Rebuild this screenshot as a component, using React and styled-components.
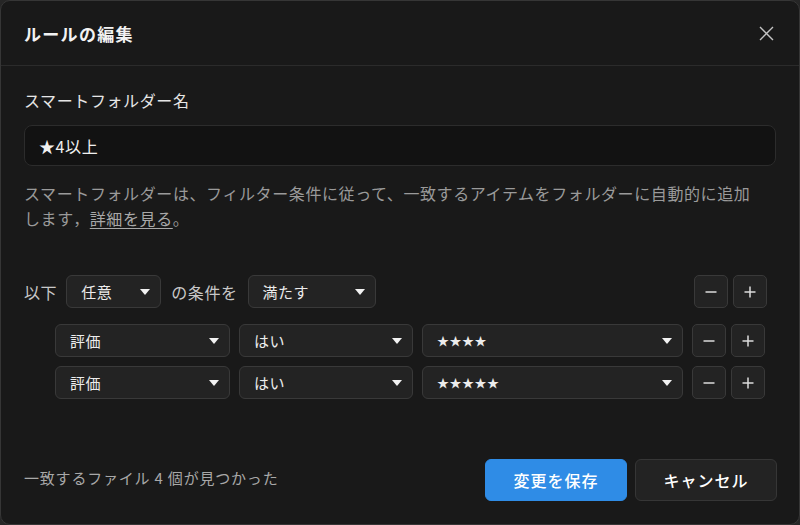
import styled, { createGlobalStyle } from 'styled-components'

const GlobalStyle = createGlobalStyle`
html, body {
    margin: 0;
    padding: 0;
    background: #262626;
}
* {
    box-sizing: border-box;
}
body {
    font-family: "Noto Sans CJK JP", "Noto Sans", sans-serif;
}
`

const Dialog = styled.div`
display: flex;
flex-direction: column;
width: 800px;
height: 525px;
background: #191919;
border: 1px solid #363636;
border-radius: 10px;
color: #e6e6e6;
overflow: hidden;
`

const Header = styled.div`
flex: 0 0 auto;
display: flex;
align-items: center;
justify-content: space-between;
height: 65px;
padding: 0 23px 0 23px;
border-bottom: 1px solid #2b2b2b;
`

const Title = styled.div`
font-size: 17px;
font-weight: 700;
letter-spacing: 1.3px;
color: #f2f2f2;
`

const Close = styled.div`
display: flex;
width: 20px;
height: 20px;
align-items: center;
justify-content: center;
cursor: pointer;
color: #c4c4c4;
`

const Body = styled.div`
flex: 1 1 auto;
display: flex;
flex-direction: column;
padding: 23px 23px 0 23px;
`

const Label = styled.div`
font-size: 16px;
letter-spacing: 0.6px;
line-height: 22px;
color: #e6e6e6;
`

const NameInput = styled.div`
display: flex;
align-items: center;
height: 41px;
margin-top: 14px;
padding: 0 14px;
background: #121212;
border: 1px solid #2c2c2c;
border-radius: 8px;
font-size: 16px;
letter-spacing: 0.6px;
color: #f0f0f0;
`

const Help = styled.div`
margin-top: 15px;
font-size: 16px;
letter-spacing: 0.6px;
line-height: 25px;
color: #9a9a9a;
a {
    color: #a8a8a8;
    text-decoration: underline;
    text-underline-offset: 3px;
}
`

const LogicRow = styled.div`
display: flex;
align-items: center;
gap: 9px;
margin-top: 44px;
padding-right: 9px;
font-size: 16px;
letter-spacing: 0.6px;
color: #c8c8c8;
`

const Spacer = styled.div`
flex: 1 1 auto;
`

const Conditions = styled.div`
display: flex;
flex-direction: column;
gap: 9px;
margin-top: 16px;
padding: 0 11px 0 31px;
`

const CondRow = styled.div`
display: flex;
align-items: center;
gap: 9px;
`

const Select = styled.div`
display: flex;
align-items: center;
justify-content: space-between;
flex: ${({ $grow }) => $grow ? '1 1 auto' : '0 0 auto'};
width: ${({ $width }) => $width ? $width + 'px' : 'auto'};
height: 33px;
padding: 0 10px 0 14px;
background: #232323;
border: 1px solid #393939;
border-radius: 6px;
font-size: 15px;
letter-spacing: 0.5px;
color: #ececec;
`

const Stars = styled.span`
font-size: 12px;
letter-spacing: 0.5px;
`

const Caret = styled.span`
width: 0;
height: 0;
border-left: 5px solid transparent;
border-right: 5px solid transparent;
border-top: 6px solid #f2f2f2;
`

const Buttons = styled.div`
display: flex;
gap: 5px;
`

const Square = styled.div`
display: flex;
align-items: center;
justify-content: center;
width: 34px;
height: 33px;
background: #232323;
border: 1px solid #393939;
border-radius: 5px;
color: #dcdcdc;
`

const Footer = styled.div`
flex: 0 0 auto;
display: flex;
align-items: center;
justify-content: space-between;
padding: 0 22px 23px 23px;
`

const Found = styled.div`
font-size: 15px;
letter-spacing: 0.8px;
color: #a8a8a8;
margin-top: -6px;
`

const Actions = styled.div`
display: flex;
gap: 8px;
`

const Button = styled.div`
display: flex;
align-items: center;
justify-content: center;
width: 142px;
height: 42px;
border-radius: 6px;
font-size: 16px;
letter-spacing: 1px;
font-weight: 500;
color: #ffffff;
background: ${({ $primary }) => $primary ? '#2f8ce6' : '#232323'};
border: 1px solid ${({ $primary }) => $primary ? '#2f8ce6' : '#363636'};
cursor: pointer;
`

const Minus = () => (
    <svg width="14" height="14" viewBox="0 0 14 14">
        <path d="M1.5 7h11" stroke="currentColor" strokeWidth="1.5" />
    </svg>
)

const Plus = () => (
    <svg width="14" height="14" viewBox="0 0 14 14">
        <path d="M1.5 7h11M7 1.5v11" stroke="currentColor" strokeWidth="1.5" />
    </svg>
)

const conditions = [
    { field: '評価', op: 'はい', value: '★★★★' },
    { field: '評価', op: 'はい', value: '★★★★★' }
]

const App = () => {

    const rows = conditions.map(({ field, op, value }, i) => (
        <CondRow key={i}>
            <Select $width={175}>{field}<Caret /></Select>
            <Select $width={174}>{op}<Caret /></Select>
            <Select $grow><Stars>{value}</Stars><Caret /></Select>
            <Buttons>
                <Square><Minus /></Square>
                <Square><Plus /></Square>
            </Buttons>
        </CondRow>
    ))

    return (
        <>
            <GlobalStyle />
            <Dialog>
                <Header>
                    <Title>ルールの編集</Title>
                    <Close>
                        <svg width="15" height="15" viewBox="0 0 15 15">
                            <path d="M1 1l13 13M14 1L1 14" stroke="currentColor" strokeWidth="1.4" />
                        </svg>
                    </Close>
                </Header>
                <Body>
                    <Label>スマートフォルダー名</Label>
                    <NameInput>★4以上</NameInput>
                    <Help>
                        スマートフォルダーは、フィルター条件に従って、一致するアイテムをフォルダーに自動的に追加<br />
                        します，<a>詳細を見る</a>。
                    </Help>
                    <LogicRow>
                        以下
                        <Select $width={95}>任意<Caret /></Select>
                        <span style={{ margin: '0 1px' }}>の条件を</span>
                        <Select $width={128}>満たす<Caret /></Select>
                        <Spacer />
                        <Buttons>
                            <Square><Minus /></Square>
                            <Square><Plus /></Square>
                        </Buttons>
                    </LogicRow>
                    <Conditions>
                        {rows}
                    </Conditions>
                </Body>
                <Footer>
                    <Found>一致するファイル 4 個が見つかった</Found>
                    <Actions>
                        <Button $primary>変更を保存</Button>
                        <Button>キャンセル</Button>
                    </Actions>
                </Footer>
            </Dialog>
        </>
    )
}

export default App
